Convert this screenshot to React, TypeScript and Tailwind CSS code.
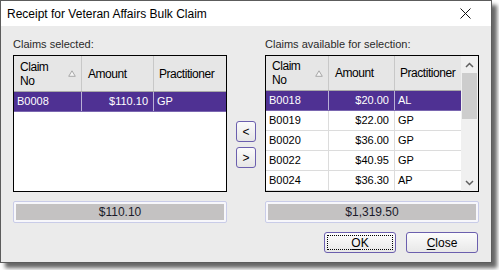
import React from "react";

type Row = { no: string; amount: string; prac: string; selected?: boolean };

const selectedRows: Row[] = [{ no: "B0008", amount: "$110.10", prac: "GP", selected: true }];

const availableRows: Row[] = [
  { no: "B0018", amount: "$20.00", prac: "AL", selected: true },
  { no: "B0019", amount: "$22.00", prac: "GP" },
  { no: "B0020", amount: "$36.00", prac: "GP" },
  { no: "B0022", amount: "$40.95", prac: "GP" },
  { no: "B0024", amount: "$36.30", prac: "AP" },
];

function SortGlyph() {
  return (
    <svg width="8" height="7" viewBox="0 0 8 7" className="shrink-0">
      <path d="M4 0.8 L7.3 6.3 L0.7 6.3 Z" fill="#f4f4f4" stroke="#a8a8a8" strokeWidth="1" />
    </svg>
  );
}

function ClaimsGrid({ rows, cols, scroll }: { rows: Row[]; cols: [number, number, number]; scroll?: boolean }) {
  return (
    <div className="flex h-[137px] border border-black bg-white">
      <div className="flex flex-col">
        {/* header */}
        <div className="flex h-[36px] bg-[#e6e6e6] border-b border-[#a9a9a9] text-[12px] tracking-[-0.45px] text-black">
          <div style={{ width: cols[0] }} className="flex items-center justify-between pl-[6px] pr-[5px] border-r border-[#c8c8c8] leading-[14px]">
            <span>
              Claim
              <br />
              No
            </span>
            <SortGlyph />
          </div>
          <div style={{ width: cols[1] }} className="flex items-center pl-[6px] border-r border-[#c8c8c8]">
            Amount
          </div>
          <div style={{ width: cols[2] }} className="flex items-center pl-[5px] whitespace-nowrap overflow-hidden">
            Practitioner
          </div>
        </div>
        {rows.map((r) => (
          <div
            key={r.no}
            className={`flex h-[20px] text-[11px] leading-[19px] border-b ${
              r.selected ? "bg-[#4f3193] text-white border-[#7a66b0]" : "bg-white text-black border-[#dcdcdc]"
            }`}
          >
            <div style={{ width: cols[0] }} className={`pl-[3px] border-r ${r.selected ? "border-[#b9b0d6]" : "border-[#dcdcdc]"}`}>
              {r.no}
            </div>
            <div style={{ width: cols[1] }} className={`pr-[5px] text-right border-r ${r.selected ? "border-[#b9b0d6]" : "border-[#dcdcdc]"}`}>
              {r.amount}
            </div>
            <div style={{ width: cols[2] }} className="pl-[3px]">
              {r.prac}
            </div>
          </div>
        ))}
      </div>
      {scroll && (
        <div className="ml-auto flex w-[17px] flex-col items-center bg-[#f0f0f0]">
          <div className="flex h-[17px] w-full items-center justify-center">
            <svg width="9" height="6" viewBox="0 0 9 6">
              <path d="M1 5 L4.5 1.5 L8 5" fill="none" stroke="#606060" strokeWidth="1.5" />
            </svg>
          </div>
          <div className="h-[46px] w-[15px] bg-[#cdcdcd]" />
          <div className="flex-1" />
          <div className="flex h-[17px] w-full items-center justify-center">
            <svg width="9" height="6" viewBox="0 0 9 6">
              <path d="M1 1 L4.5 4.5 L8 1" fill="none" stroke="#606060" strokeWidth="1.5" />
            </svg>
          </div>
        </div>
      )}
    </div>
  );
}

function TotalBox({ value }: { value: string }) {
  return (
    <div className="mt-[9px] h-[22px] rounded-[2px] border border-[#c9cce8] bg-[#f7f7fb] p-[2px]">
      <div className="flex h-full items-center justify-center bg-[#c4c2c2] text-[12px] text-[#1a1a2a]">{value}</div>
    </div>
  );
}

function ArrowButton({ label }: { label: string }) {
  return (
    <button className="flex h-[21px] w-[20px] items-center justify-center rounded-[3px] border border-[#6b5fae] bg-gradient-to-b from-[#fbfbfb] to-[#e6e6e6] text-[12px] leading-none text-black">
      {label}
    </button>
  );
}

function DialogButton({ children, focused }: { children: React.ReactNode; focused?: boolean }) {
  return (
    <button className="relative flex h-[21px] w-[72px] items-center justify-center rounded-[3px] border border-[#6b5fae] bg-gradient-to-b from-[#fcfcfc] to-[#e8e8e8] text-[12px] text-black">
      {focused && <span className="absolute inset-[2px] border border-dotted border-black" />}
      <span className="relative">{children}</span>
    </button>
  );
}

export default function App() {
  return (
    <div className="h-[270px] w-[499px] bg-white" style={{ fontFamily: '"Liberation Sans", Arial, sans-serif' }}>
      <div className="flex h-[263px] w-[492px] flex-col border border-[#5c5c5c] bg-[#ebebeb] shadow-[5px_5px_4px_rgba(0,0,0,0.6)]">
        {/* title bar */}
        <div className="flex h-[25px] shrink-0 items-center justify-between bg-white pl-[6px] pr-[20px]">
          <span className="text-[12px] text-black">Receipt for Veteran Affairs Bulk Claim</span>
          <svg width="11" height="11" viewBox="0 0 11 11">
            <path d="M0.5 0.5 L10.5 10.5 M10.5 0.5 L0.5 10.5" stroke="#111" strokeWidth="1" />
          </svg>
        </div>

        <div className="flex px-[12px] pt-[11px]">
          {/* selected */}
          <div className="w-[214px]">
            <div className="mb-[4px] h-[14px] text-[11px] leading-[14px] text-[#2a2a2a]">Claims selected:</div>
            <ClaimsGrid rows={selectedRows} cols={[68, 72, 72]} />
            <TotalBox value="$110.10" />
          </div>

          {/* move buttons */}
          <div className="mx-[9px] mt-[84px] flex flex-col gap-[5px]">
            <ArrowButton label="<" />
            <ArrowButton label=">" />
          </div>

          {/* available */}
          <div className="w-[214px]">
            <div className="mb-[4px] h-[14px] text-[11px] leading-[14px] text-[#2a2a2a]">Claims available for selection:</div>
            <ClaimsGrid rows={availableRows} cols={[63, 66, 66]} scroll />
            <TotalBox value="$1,319.50" />
            <div className="mt-[9px] flex justify-end gap-[10px] pr-px">
              <DialogButton focused>
                <span className="underline underline-offset-2">O</span>K
              </DialogButton>
              <DialogButton>
                <span className="underline underline-offset-2">C</span>lose
              </DialogButton>
            </div>
          </div>
        </div>
      </div>
    </div>
  );
}
